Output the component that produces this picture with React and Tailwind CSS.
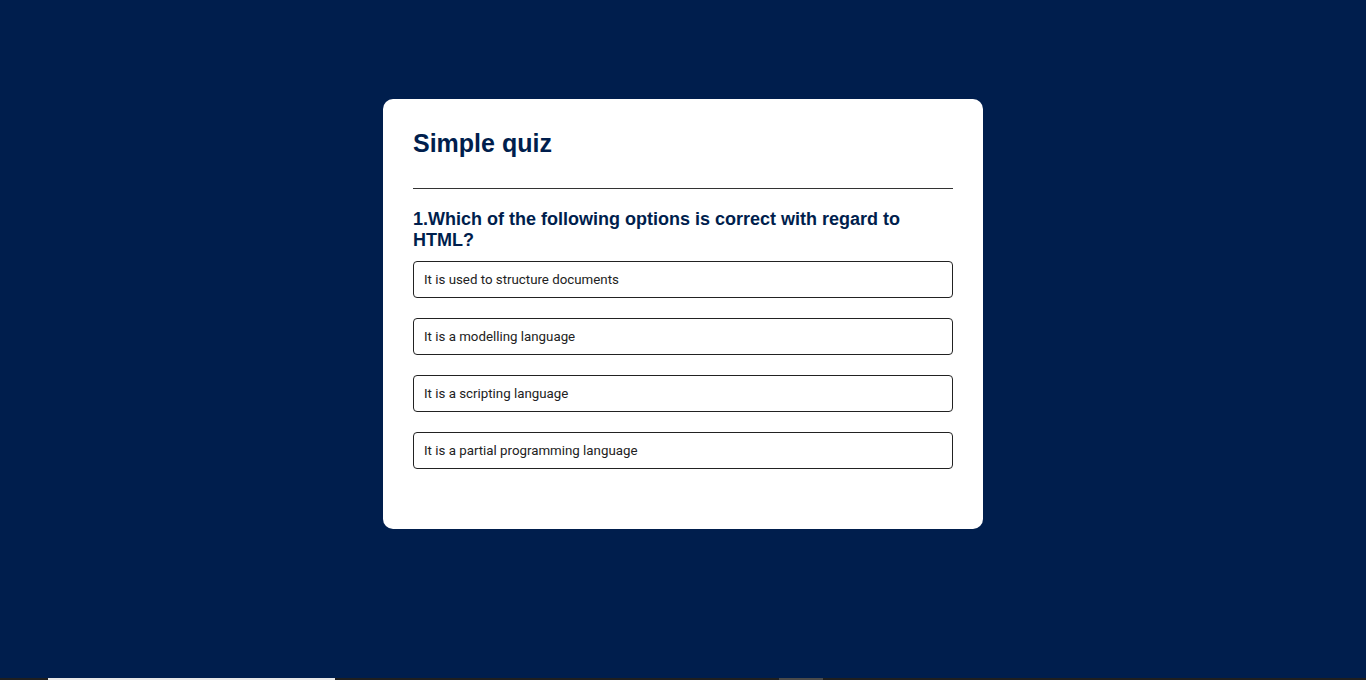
import React from 'react';

const options = [
  'It is used to structure documents',
  'It is a modelling language',
  'It is a scripting language',
  'It is a partial programming language',
];

const App = () => {
  return (
    <div className="flex h-[680px] flex-col bg-[#001e4d]">
      <div className="flex-1 pt-[99px]">
        <div
          className="mx-auto w-[600px] rounded-[10px] bg-white px-[30px] pt-[30px] pb-[60px]"
          style={{ fontFamily: '"Liberation Sans", Arial, sans-serif' }}
        >
          <h1 className="border-b border-[#333] pb-[30px] text-[25px] font-bold leading-[29px] text-[#001e4d]">
            Simple quiz
          </h1>
          <h2 className="mt-[20px] text-[18px] font-bold leading-[20.7px] text-[#001e4d]">
            1.Which of the following options is correct with regard to HTML?
          </h2>
          <div className="mt-[11px] flex flex-col gap-5">
            {options.map((opt) => (
              <button
                key={opt}
                type="button"
                className="w-full rounded-[4px] border border-[#222] bg-white px-[10px] py-[10px] text-left text-[13.3px] leading-[15px] text-[#222]"
                style={{ fontFamily: 'Roboto, "Liberation Sans", sans-serif' }}
              >
                {opt}
              </button>
            ))}
          </div>
        </div>
      </div>
      <div className="flex h-[2px] bg-[#1f1f1f]">
        <div className="ml-[48px] w-[287px] bg-[#e8e8e8]" />
        <div className="ml-[444px] w-[44px] bg-[#4a4a4a]" />
      </div>
    </div>
  );
};

export default App;
